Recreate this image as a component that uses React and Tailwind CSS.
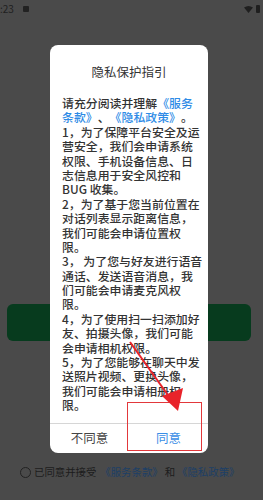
import React from 'react';

const lines = [
  [['请充分阅读并理解', false], ['《服务', true]],
  [['条款》', true], ['、', false], ['《隐私政策》', true], ['。', false]],
  [['1，为了保障平台安全及运', false]],
  [['营安全，我们会申请系统', false]],
  [['权限、手机设备信息、日', false]],
  [['志信息用于安全风控和', false]],
  [['BUG 收集。', false]],
  [['2，为了基于您当前位置在', false]],
  [['对话列表显示距离信息，', false]],
  [['我们可能会申请位置权', false]],
  [['限。', false]],
  [['3， 为了您与好友进行语音', false]],
  [['通话、发送语音消息，我', false]],
  [['们可能会申请麦克风权', false]],
  [['限。', false]],
  [['4，为了使用扫一扫添加好', false]],
  [['友、拍摄头像，我们可能', false]],
  [['会申请相机权限。', false]],
  [['5，为了您能够在聊天中发', false]],
  [['送照片视频、更换头像，', false]],
  [['我们可能会申请相册权', false]],
  [['限。', false]],
];

const App = () => {
  return (
    <div
      className="relative w-[263px] h-[500px] overflow-hidden bg-[#4a4a4a]"
      style={{ fontFamily: '"Noto Sans CJK SC", "Noto Sans", sans-serif' }}
    >
      {/* status bar */}
      <div className="flex items-center justify-between h-[18px] text-[10px] text-[#1f1f1f]">
        <div className="flex items-center gap-[9px]">
          <span className="leading-none">:23</span>
          <span className="w-[6px] h-[6px] bg-[#222] rounded-[1px]"></span>
        </div>
        <div className="flex items-center gap-[3px] pr-[3px]">
          <svg width="9" height="7" viewBox="0 0 9 7">
            <path d="M0 1.5 Q4.5 -1.5 9 1.5 L4.5 7 Z" fill="#1f1f1f" />
          </svg>
          <span className="w-[4px] h-[8px] bg-[#1f1f1f] rounded-[1px]"></span>
        </div>
      </div>

      {/* green button under overlay */}
      <div className="absolute left-[7px] top-[304px] w-[244px] h-[37px] rounded-[6px] bg-[#073b1e]"></div>

      {/* agree row */}
      <div className="absolute left-[20px] top-[466px] flex items-center gap-[2px] text-[10.4px] leading-[12px] text-[#1c1c1c]">
        <span className="w-[11px] h-[11px] rounded-full border border-[#222]"></span>
        <span className="ml-[1px]">已同意并接受</span>
        <span className="ml-[2px] text-[#1d3f66]">《服务条款》</span>
        <span>和</span>
        <span className="text-[#1d3f66]">《隐私政策》</span>
      </div>

      {/* dialog */}
      <div className="absolute left-[50px] top-[45px] w-[158px] h-[408px] bg-white rounded-[8px] flex flex-col">
        <div className="h-[48px] flex items-center justify-center pt-[6px] text-[12.5px] text-[#333]">
          隐私保护指引
        </div>
        <div className="flex-1 px-[12px] pt-[3px] text-[11.9px] leading-[14.4px] text-[#333] font-medium">
          {lines.map((l, i) => (
            <div key={i} className="whitespace-nowrap h-[14.4px] overflow-visible">
              {l.map(([t, link], j) => (
                <span key={j} className={'inline-block leading-[14.4px] h-[14.4px] align-top ' + (link ? 'text-[#2e8be6]' : '')}>{t}</span>
              ))}
            </div>
          ))}
        </div>
        <div className="h-[30px] border-t border-[#d6d6d6] flex text-[12.5px]">
          <div className="flex-1 flex items-center justify-center text-[#444]">不同意</div>
          <div className="flex-1 flex items-center justify-center text-[#3a8ee6]">同意</div>
        </div>
      </div>

      {/* red highlight rect */}
      <div className="absolute left-[127px] top-[402px] w-[75px] h-[49px] border-[1.5px] border-[#e2383b]"></div>

      {/* red arrow */}
      <svg className="absolute left-0 top-0" width="263" height="500" viewBox="0 0 263 500">
        <line x1="130" y1="342" x2="170" y2="398" stroke="#e8232a" strokeWidth="2" />
        <path d="M178 411 L162 396 L183 388 Z" fill="#e8232a" />
      </svg>
    </div>
  );
};

export default App;
